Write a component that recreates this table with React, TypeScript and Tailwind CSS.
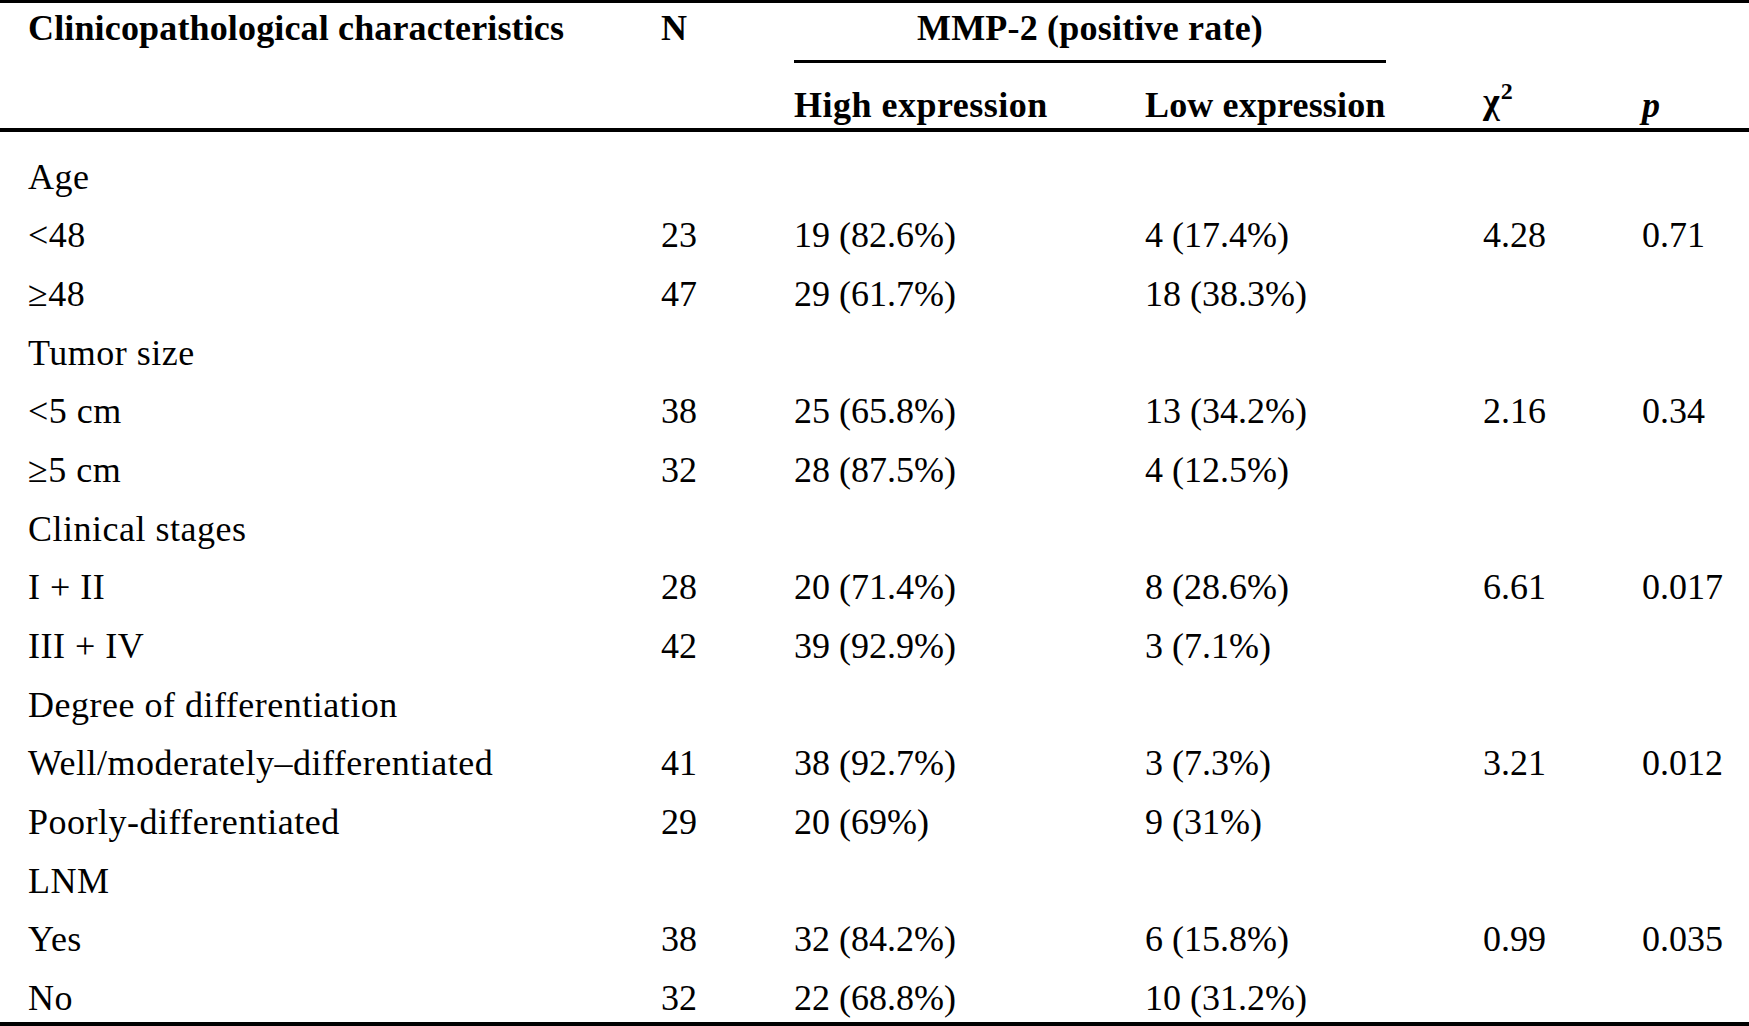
import React from 'react'

interface Row {
  label: string
  n?: string
  high?: string
  low?: string
  chi?: string
  p?: string
}

// 表格数据：分组标题行只有 label
const ROWS: Row[] = [
  { label: 'Age' },
  { label: '<48', n: '23', high: '19 (82.6%)', low: '4 (17.4%)', chi: '4.28', p: '0.71' },
  { label: '≥48', n: '47', high: '29 (61.7%)', low: '18 (38.3%)' },
  { label: 'Tumor size' },
  { label: '<5 cm', n: '38', high: '25 (65.8%)', low: '13 (34.2%)', chi: '2.16', p: '0.34' },
  { label: '≥5 cm', n: '32', high: '28 (87.5%)', low: '4 (12.5%)' },
  { label: 'Clinical stages' },
  { label: 'I + II', n: '28', high: '20 (71.4%)', low: '8 (28.6%)', chi: '6.61', p: '0.017' },
  { label: 'III + IV', n: '42', high: '39 (92.9%)', low: '3 (7.1%)' },
  { label: 'Degree of differentiation' },
  { label: 'Well/moderately–differentiated', n: '41', high: '38 (92.7%)', low: '3 (7.3%)', chi: '3.21', p: '0.012' },
  { label: 'Poorly-differentiated', n: '29', high: '20 (69%)', low: '9 (31%)' },
  { label: 'LNM' },
  { label: 'Yes', n: '38', high: '32 (84.2%)', low: '6 (15.8%)', chi: '0.99', p: '0.035' },
  { label: 'No', n: '32', high: '22 (68.8%)', low: '10 (31.2%)' },
]

const COLS = 'grid grid-cols-[633px_133px_351px_338px_159px_107px] pl-[28px]'

export default function App() {
  return (
    <div className="w-[1749px] h-[1026px] bg-white text-black font-['Liberation_Serif','Times_New_Roman',serif] text-[36px] whitespace-nowrap overflow-hidden">
      {/* 表头 */}
      <div className="border-t-[3px] border-b-[4px] border-black font-bold">
        <div className={`${COLS} h-[60px] leading-[50px]`}>
          <div className="tracking-[0.15px]">Clinicopathological characteristics</div>
          <div>N</div>
          <div className="col-span-2">
            <div className="w-[592px] h-[60px] border-b-[3px] border-black text-center tracking-[0.2px]">
              MMP-2 (positive rate)
            </div>
          </div>
          <div />
          <div />
        </div>
        <div className={`${COLS} h-[65px] items-end pb-[3px] leading-[40px]`}>
          <div />
          <div />
          <div className="tracking-[0.5px]">High expression</div>
          <div className="tracking-[0.15px]">Low expression</div>
          <div>
            χ<span className="text-[24px] relative top-[-14px] ml-[1px]">2</span>
          </div>
          <div className="italic">p</div>
        </div>
      </div>

      {/* 表体 */}
      <div className="pt-[15.5px] border-b-[4px] border-black">
        {ROWS.map((r, i) => (
          <div
            key={i}
            className={`${COLS} leading-[58.7px] ${
              i === ROWS.length - 1 ? 'h-[52.7px]' : 'h-[58.7px]'
            }`}
          >
            <div className="tracking-[0.5px]">{r.label}</div>
            <div>{r.n}</div>
            <div>{r.high}</div>
            <div>{r.low}</div>
            <div>{r.chi}</div>
            <div>{r.p}</div>
          </div>
        ))}
      </div>
    </div>
  )
}
